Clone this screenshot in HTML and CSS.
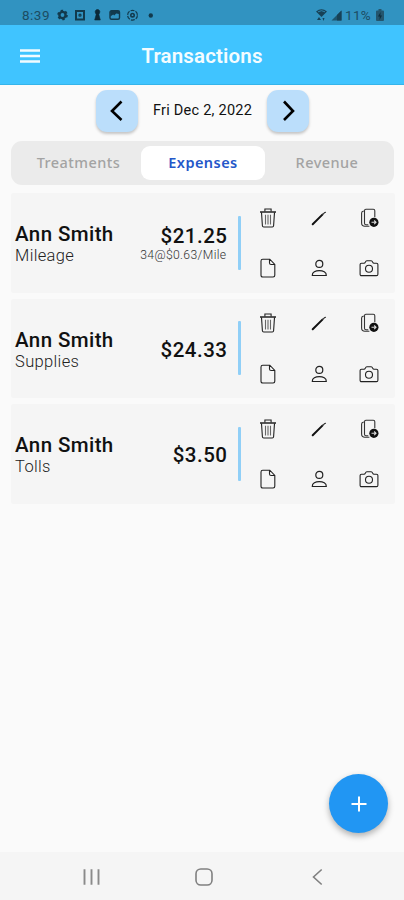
FILE: index.html
```
<!DOCTYPE html>
<html lang="en">
<head>
<meta charset="utf-8">
<title>Transactions</title>
<link rel="stylesheet" href="styles.css">
</head>
<body>
<svg class="defs" aria-hidden="true">
  <symbol id="trash" viewBox="0 0 20 22"><g fill="none" stroke="#222" stroke-width="1.1"><path d="M2 5h16" stroke-width="1.5"/><path d="M6.900 4.500V2h6.200v2.500M3.500 5.400l.9 13.400q.1 1.200 1.300 1.200h8.600q1.200 0 1.300-1.200l.9-13.400"/><path d="M7.500 7.700v9.800M10 7.700v9.800M12.500 7.700v9.800" stroke="#666"/></g></symbol>
  <symbol id="edit" viewBox="0 0 20 22"><path d="M3.700 17.200L13.400 7.600" stroke="#111" stroke-width="2" stroke-linecap="round"/><path d="M13.200 7.800l2.500-2.300 1.300-.2" fill="none" stroke="#333" stroke-width="1.100"/></symbol>
  <symbol id="copy" viewBox="0 0 20 22"><g fill="none" stroke="#333" stroke-width="1.100"><path d="M5.500 3.700q0-1.400 1.400-1.400h7.400q1.500 0 1.500 1.500v6.500M5.500 3.500v12.700q0 1.500 1.500 1.500h2.300M4.800 4q-2.200.2-2.200 2v10q0 3.200 3.300 3.200h4.500"/></g><circle cx="14.900" cy="15.300" r="4.600" fill="#111"/><path d="M12.500 15.300h4.500M15.200 13.500l1.800 1.800-1.800 1.800" fill="none" stroke="#ddd" stroke-width="1.100"/></symbol>
  <symbol id="file" viewBox="0 0 20 22"><path d="M4.700 2.200h7.100l5 5.200v10.900q0 1.700-1.700 1.700H4.700Q3 20 3 18.300V3.900q0-1.700 1.700-1.700zM11.500 2.400v3.500q0 1.600 1.600 1.600h3.600" fill="none" stroke="#222" stroke-width="1.100"/></symbol>
  <symbol id="person" viewBox="0 0 20 22"><g fill="none" stroke="#222" stroke-width="1.200"><circle cx="10.300" cy="6.900" r="3.500"/><path d="M3.300 18.500c-.5-6.500 14.500-6.500 14 0z"/></g></symbol>
  <symbol id="camera" viewBox="0 0 20 22"><g fill="none" stroke="#222" stroke-width="1.100"><path d="M2.500 6.200h2.400q1 0 1.500-1.200.5-1.300 1.500-1.300h4.200q1 0 1.500 1.300.5 1.200 1.500 1.200h2.400q1.400 0 1.400 1.400v9.600q0 1.400-1.400 1.400h-15q-1.400 0-1.400-1.400V7.600q0-1.400 1.400-1.400z"/><circle cx="10" cy="11.700" r="3.500"/></g></symbol>
</svg>
<div class="screen">
  <div class="status">
    <span class="clock">8:39</span>
    <svg class="notices" viewBox="0 0 100 14" fill="none" stroke="#123a4d" stroke-width="2">
      <circle cx="6.500" cy="7" r="3.100" stroke-width="2.400"/><circle cx="6.500" cy="7" r="4.500" stroke-width="1.600" stroke-dasharray="2.400 2.310"/>
      <rect x="20" y="3" width="8" height="8.500"/><circle cx="24" cy="7.200" r="1" stroke-width="1.300"/>
      <path d="M41.500 1.500a2.300 2.300 0 0 1 2 3.500l-.7 1.500 1.500 5.500h-5.600l1.500-5.500-.7-1.500a2.300 2.300 0 0 1 2-3.500z" fill="#0b2938" stroke="#0b2938" stroke-width=".6"/>
      <rect x="54" y="2.800" width="9.500" height="8.500" rx="1.500" stroke-width="1.400"/><path d="M54.300 3h8.900v3l-3-.5-2 2-1-1-2.900 2z" fill="#123a4d" stroke="none"/>
      <circle cx="76.500" cy="7.200" r="4.900" stroke-width="1.200" stroke-dasharray="4 1.130"/><circle cx="76.500" cy="7.200" r="1.700" stroke-width="1.600"/>
      <circle cx="94.800" cy="7.500" r="2.200" fill="#123a4d" stroke="none"/>
    </svg>
    <svg class="signal" viewBox="0 0 28 14" fill="#174156">
      <path d="M0 3.500q5.500-4.500 11 0L5.500 9z"/><path d="M2 3.800q3.500-2.200 7 0" stroke="#3193c1" fill="none" stroke-width=".8"/><path d="M1 12l2-3 2 3zM6.500 10h2l-1 3z"/>
      <path d="M15.500 12.500L25.500 2.500v10z" opacity=".75"/><path d="M21 7l4.500-4.500v10H21z"/>
    </svg>
    <span class="percent">11%</span>
    <svg class="battery" viewBox="0 0 8 14"><path d="M2.500 1h3v1.500H7q1 0 1 1V12q0 1-1 1H1q-1 0-1-1V3.500q0-1 1-1h1.500z" fill="#24566e"/><path d="M4.600 4L2 8.500h1.800L3.500 12 6 7.500H4.300z" fill="#0c2c3c"/></svg>
  </div>
  <header class="appbar">
    <svg class="menu" viewBox="0 0 20 14"><path d="M0 1.500h20M0 7h20M0 12.500h20" stroke="#f1fbff" stroke-width="2.300"/></svg>
    <h1>Transactions</h1>
  </header>
  <main>
    <div class="dates">
      <button class="step"><svg viewBox="0 0 42 42"><path d="M25.500 11.500L16 21 25.500 30"/></svg></button>
      <span class="date">Fri Dec 2, 2022</span>
      <button class="step"><svg viewBox="0 0 42 42"><path d="M17 11.500L26 21 17 30"/></svg></button>
    </div>
    <nav class="tabs">
      <span class="tab">Treatments</span><span class="tab active">Expenses</span><span class="tab">Revenue</span>
    </nav>
    <section class="list">
      <article class="card">
        <div class="who"><div class="name">Ann Smith</div><div class="kind">Mileage</div></div>
        <div class="sum"><div class="amount">$21.25</div><div class="rate">34@$0.63/Mile</div></div>
        <div class="bar"></div>
        <div class="actions"><svg><use href="#trash"/></svg><svg><use href="#edit"/></svg><svg><use href="#copy"/></svg><svg><use href="#file"/></svg><svg><use href="#person"/></svg><svg><use href="#camera"/></svg></div>
      </article>
      <article class="card">
        <div class="who"><div class="name">Ann Smith</div><div class="kind">Supplies</div></div>
        <div class="sum"><div class="amount">$24.33</div></div>
        <div class="bar"></div>
        <div class="actions"><svg><use href="#trash"/></svg><svg><use href="#edit"/></svg><svg><use href="#copy"/></svg><svg><use href="#file"/></svg><svg><use href="#person"/></svg><svg><use href="#camera"/></svg></div>
      </article>
      <article class="card">
        <div class="who"><div class="name">Ann Smith</div><div class="kind">Tolls</div></div>
        <div class="sum"><div class="amount">$3.50</div></div>
        <div class="bar"></div>
        <div class="actions"><svg><use href="#trash"/></svg><svg><use href="#edit"/></svg><svg><use href="#copy"/></svg><svg><use href="#file"/></svg><svg><use href="#person"/></svg><svg><use href="#camera"/></svg></div>
      </article>
    </section>
  </main>
  <button class="fab"><svg viewBox="0 0 16 16"><path d="M8 .5v15M.5 8h15" stroke="#fff" stroke-width="2"/></svg></button>
  <footer class="sysnav">
    <svg viewBox="0 0 20 20"><path d="M3.500 2.200v15.600M10.500 2.200v15.600M17.500 2.200v15.600" stroke="#8a8a8a" stroke-width="1.900"/></svg>
    <svg viewBox="0 0 20 20"><rect x="2" y="2" width="16" height="16" rx="4.800" fill="none" stroke="#808080" stroke-width="1.600"/></svg>
    <svg viewBox="0 0 20 20"><path d="M14.700 2.500L6.500 10l8.200 7.500" fill="none" stroke="#808080" stroke-width="1.600"/></svg>
  </footer>
</div>
</body>
</html>
```
FILE: styles.css
```
* { box-sizing: border-box; }
body { margin: 0; font-family: Roboto, sans-serif; color: #111; background: #fafafa; }
button { border: 0; padding: 0; }
svg { display: block; }
.defs { position: absolute; width: 0; height: 0; }
.screen { position: relative; width: 404px; height: 900px; display: flex; flex-direction: column; overflow: hidden; }
.status { height: 25px; flex: none; background: #3193c1; display: flex; align-items: center; padding: 5px 20px 0 22px; color: #1c4c63; font-size: 13.5px; line-height: 18px; }
.clock { width: 34px; letter-spacing: .5px; }
.notices { width: 100px; height: 14px; }
.signal { width: 28px; height: 14px; margin-left: auto; }
.percent { width: 31px; margin-left: 1px; letter-spacing: .3px; }
.battery { width: 8px; height: 14px; }
.appbar { height: 60px; flex: none; background: #40c4ff; border-bottom: 1px solid #35b4ea; display: grid; grid-template-columns: 20px 1fr 20px; align-items: center; padding: 1px 20px 0; }
.menu { width: 20px; height: 14px; margin-top: 1px; }
h1 { margin: 2px 0 0; text-align: center; color: #f4fcff; font-size: 20.500px; font-weight: 600; letter-spacing: .15px; line-height: 24px; }
main { flex: 1; padding: 4px 9px 0 11px; }
.dates { display: flex; justify-content: center; align-items: center; height: 43px; padding-right: 1px; }
.step { width: 42px; height: 42px; border-radius: 11px; background: #bbdefb; box-shadow: 0 2px 3px rgba(0,0,0,.22); }
.step path { fill: none; stroke: #000; stroke-width: 2.600; }
.date { width: 129px; text-align: center; font-size: 14.500px; letter-spacing: .25px; color: #111; white-space: nowrap; }
.tabs { margin: 9px 0 0; width: 383px; height: 44px; border-radius: 11px; background: #ebebeb; padding: 5px; display: grid; grid-template-columns: 125px 124px 1fr; }
.tab { display: flex; align-items: center; justify-content: center; height: 34px; padding-bottom: 3px; border-radius: 9px; color: #a3a3a3; font-family: "Noto Sans", sans-serif; font-size: 14.500px; font-weight: 500; letter-spacing: .45px; }
.tab.active { background: #fff; color: #2457c9; font-weight: 600; }
.list { margin-top: 8px; display: flex; flex-direction: column; gap: 6px; }
.card { height: 99.500px; width: 384px; background: #f5f5f5; border-radius: 3px; display: flex; align-items: center; padding-left: 4px; }
.who { width: 112px; padding-top: 3px; }
.name { font-size: 20.500px; font-weight: 500; line-height: 24px; letter-spacing: .4px; white-space: nowrap; }
.kind { font-size: 16.500px; font-weight: 300; line-height: 20px; letter-spacing: .35px; color: #222; }
.sum { width: 100.500px; padding-top: 3px; text-align: right; }
.amount { font-size: 20.500px; font-weight: 500; line-height: 22px; letter-spacing: .5px; }
.rate { margin-right: 1px; font-size: 12.200px; font-weight: 300; line-height: 16px; letter-spacing: .35px; color: #333; white-space: nowrap; }
.bar { width: 3px; height: 54px; margin-left: 10.500px; background: #90cff7; border-radius: 1px; }
.actions { display: grid; grid-template-columns: repeat(3, 50.700px); grid-template-rows: repeat(2, 50.500px); align-items: center; justify-items: center; margin-left: 1.500px; }
.actions svg { width: 20px; height: 22px; }
.fab { position: absolute; left: 329px; top: 774px; width: 59px; height: 59px; border-radius: 50%; background: #2196f3; box-shadow: 0 3px 6px rgba(0,0,0,.3); display: flex; align-items: center; justify-content: center; }
.fab svg { width: 16px; height: 16px; }
.sysnav { height: 48px; flex: none; background: #f5f5f5; display: flex; justify-content: space-between; align-items: center; padding: 2px 77px 0 81px; }
.sysnav svg { width: 20px; height: 20px; }
```
